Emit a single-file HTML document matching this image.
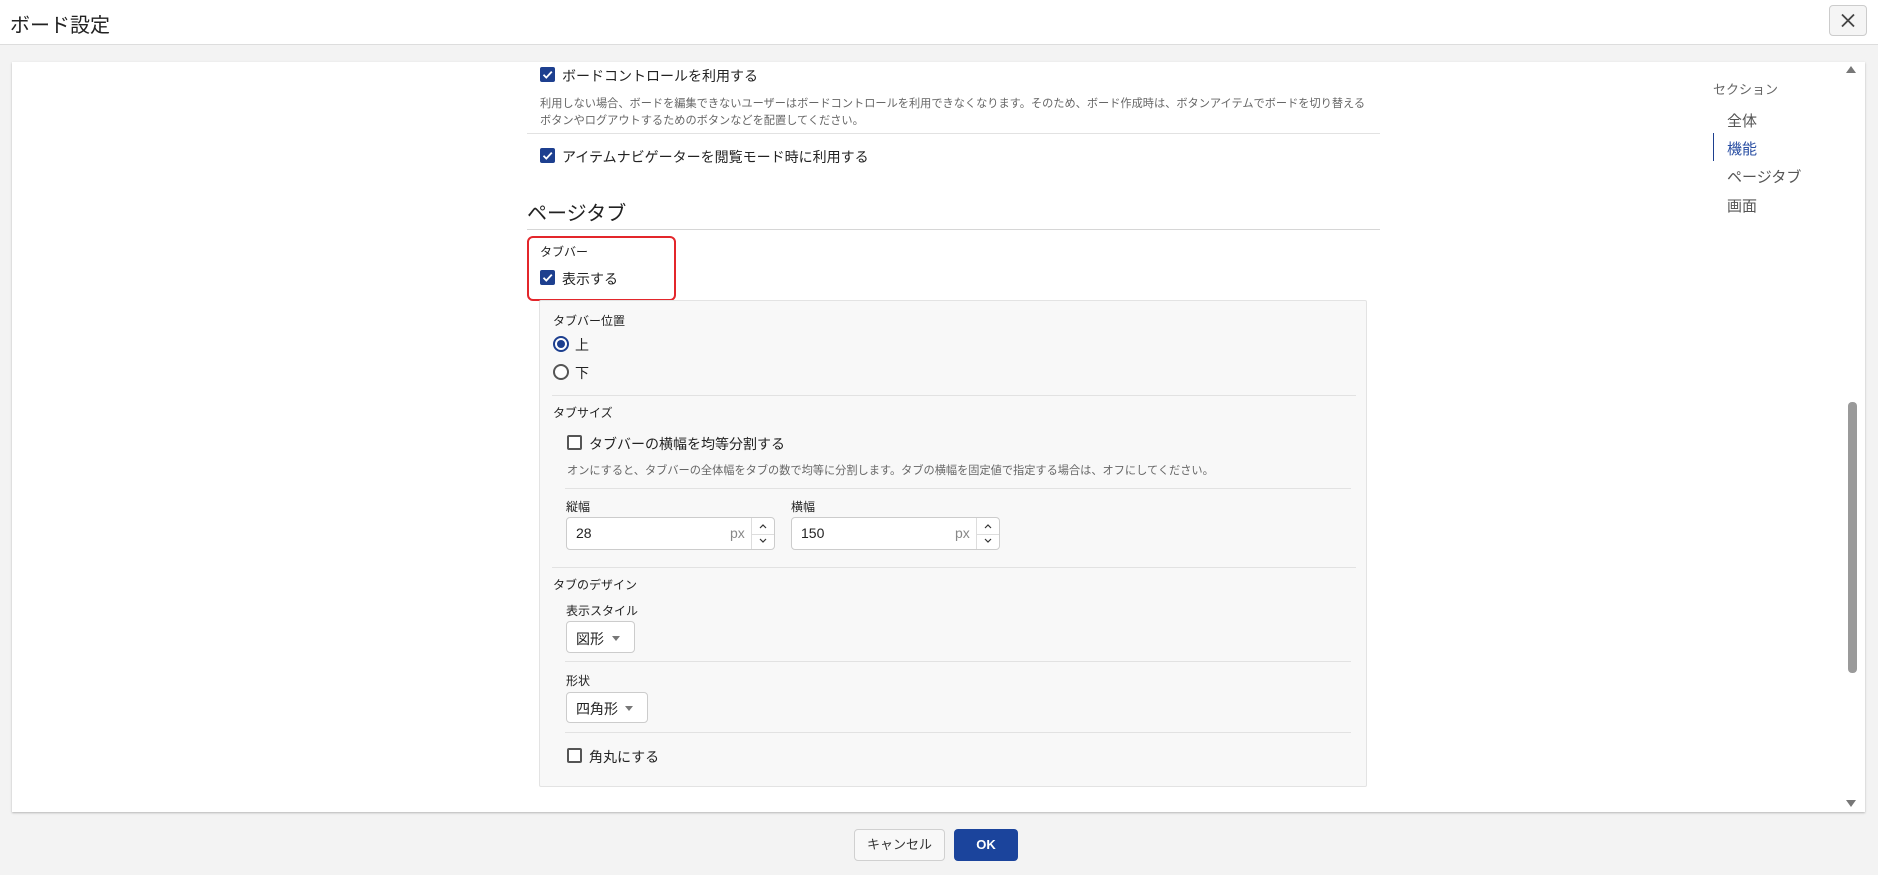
<!DOCTYPE html>
<html><head><meta charset="utf-8"><style>
*{box-sizing:border-box;margin:0;padding:0}
body{width:1878px;height:875px;background:#f3f3f3;font-family:"Liberation Sans","Noto Sans CJK JP",sans-serif;color:#222;position:relative;overflow:hidden}
.a{position:absolute;white-space:nowrap}
.hdr{left:0;top:0;width:1878px;height:45px;background:#fff;border-bottom:1px solid #ddd}
.card{left:12px;top:62px;width:1853px;height:750px;background:#fff;box-shadow:0 1px 2px rgba(0,0,0,.25)}
.cb{width:15px;height:15px;border-radius:2px;background:#1d3f8f}
.cb svg{display:block}
.cbo{width:15px;height:15px;border:2px solid #555;border-radius:2px;background:#fff}
.hr{height:1px;background:#e2e2e2}
.t15{font-size:14px}
.desc{font-size:11.2px;color:#666;line-height:17px}
.lbl{font-size:12px;color:#222}
.inp{background:#fff;border:1px solid #ccc;border-radius:4px;height:33px}
.sel{background:#fff;border:1px solid #ccc;border-radius:4px}
.nav{font-size:15px;color:#555}
</style></head><body>
<div class="a hdr"></div>
<div class="a" style="left:10px;top:9px;font-size:20px;color:#222">ボード設定</div>
<div class="a" style="left:1829px;top:5px;width:38px;height:31px;border:1px solid #ccc;border-radius:4px;background:#f5f5f5"><svg width="36" height="29" viewBox="0 0 36 29"><path d="M12 8.5l12 12M24 8.5l-12 12" stroke="#444" stroke-width="1.8"/></svg></div>

<div class="a card"></div>
<div class="a" style="left:1846px;top:66px;width:0;height:0;border-left:5px solid transparent;border-right:5px solid transparent;border-bottom:7px solid #777"></div>
<div class="a" style="left:1848px;top:402px;width:9px;height:271px;background:#9a9a9a;border-radius:4px"></div>
<div class="a" style="left:1846px;top:800px;width:0;height:0;border-left:5px solid transparent;border-right:5px solid transparent;border-top:7px solid #777"></div>

<div class="a cb" style="left:540px;top:67px"><svg width="15" height="15"><path d="M3.5 7.8l2.8 2.8 5.5-6" stroke="#fff" stroke-width="1.8" fill="none"/></svg></div>
<div class="a t15" style="left:562px;top:66px">ボードコントロールを利用する</div>
<div class="a desc" style="left:540px;top:96px">利用しない場合、ボードを編集できないユーザーはボードコントロールを利用できなくなります。そのため、ボード作成時は、ボタンアイテムでボードを切り替える<br>ボタンやログアウトするためのボタンなどを配置してください。</div>
<div class="a hr" style="left:527px;top:133px;width:853px"></div>
<div class="a cb" style="left:540px;top:148px"><svg width="15" height="15"><path d="M3.5 7.8l2.8 2.8 5.5-6" stroke="#fff" stroke-width="1.8" fill="none"/></svg></div>
<div class="a t15" style="left:562px;top:147px">アイテムナビゲーターを閲覧モード時に利用する</div>

<div class="a" style="left:527px;top:197px;font-size:20px;color:#222">ページタブ</div>
<div class="a hr" style="left:527px;top:229px;width:853px;background:#d6d6d6"></div>

<div class="a" style="left:527px;top:236px;width:149px;height:65px;border:2px solid #e3262b;border-radius:6px"></div>
<div class="a lbl" style="left:540px;top:243px">タブバー</div>
<div class="a cb" style="left:540px;top:270px"><svg width="15" height="15"><path d="M3.5 7.8l2.8 2.8 5.5-6" stroke="#fff" stroke-width="1.8" fill="none"/></svg></div>
<div class="a t15" style="left:562px;top:269px">表示する</div>

<div class="a" style="left:539px;top:300px;width:828px;height:487px;background:#f8f8f8;border:1px solid #e3e3e3;border-radius:2px"></div>
<div class="a lbl" style="left:553px;top:312px">タブバー位置</div>
<div class="a" style="left:553px;top:336px;width:16px;height:16px;border:2px solid #1d3f8f;border-radius:50%;background:#fff"><div style="margin:2px;width:8px;height:8px;border-radius:50%;background:#1d3f8f"></div></div>
<div class="a t15" style="left:575px;top:335px">上</div>
<div class="a" style="left:553px;top:364px;width:16px;height:16px;border:2px solid #555;border-radius:50%;background:#fff"></div>
<div class="a t15" style="left:575px;top:363px">下</div>
<div class="a hr" style="left:552px;top:395px;width:804px"></div>
<div class="a lbl" style="left:553px;top:404px">タブサイズ</div>
<div class="a cbo" style="left:567px;top:435px"></div>
<div class="a t15" style="left:589px;top:434px">タブバーの横幅を均等分割する</div>
<div class="a desc" style="left:567px;top:463px">オンにすると、タブバーの全体幅をタブの数で均等に分割します。タブの横幅を固定値で指定する場合は、オフにしてください。</div>
<div class="a hr" style="left:565px;top:488px;width:786px"></div>
<div class="a lbl" style="left:566px;top:498px">縦幅</div>
<div class="a lbl" style="left:791px;top:498px">横幅</div>
<div class="a inp" style="left:566px;top:517px;width:209px"><div style="position:absolute;right:22px;top:0;bottom:0;border-left:1px solid #ddd"></div><div style="position:absolute;right:0;top:16px;width:22px;border-top:1px solid #ddd"></div><svg style="position:absolute;right:0;top:0" width="22" height="31"><path d="M8 10l3-3 3 3M8 21l3 3 3-3" stroke="#333" stroke-width="1.2" fill="none"/></svg></div>
<div class="a t15" style="left:576px;top:525px">28</div>
<div class="a t15" style="left:730px;top:525px;color:#888">px</div>
<div class="a inp" style="left:791px;top:517px;width:209px"><div style="position:absolute;right:22px;top:0;bottom:0;border-left:1px solid #ddd"></div><div style="position:absolute;right:0;top:16px;width:22px;border-top:1px solid #ddd"></div><svg style="position:absolute;right:0;top:0" width="22" height="31"><path d="M8 10l3-3 3 3M8 21l3 3 3-3" stroke="#333" stroke-width="1.2" fill="none"/></svg></div>
<div class="a t15" style="left:801px;top:525px">150</div>
<div class="a t15" style="left:955px;top:525px;color:#888">px</div>
<div class="a hr" style="left:552px;top:567px;width:804px"></div>
<div class="a lbl" style="left:553px;top:576px">タブのデザイン</div>
<div class="a lbl" style="left:566px;top:602px">表示スタイル</div>
<div class="a sel" style="left:566px;top:621px;width:69px;height:32px"></div>
<div class="a t15" style="left:576px;top:629px">図形</div>
<div class="a" style="left:612px;top:636px;border-left:4px solid transparent;border-right:4px solid transparent;border-top:5px solid #777"></div>
<div class="a hr" style="left:565px;top:661px;width:786px"></div>
<div class="a lbl" style="left:566px;top:672px">形状</div>
<div class="a sel" style="left:566px;top:692px;width:82px;height:31px"></div>
<div class="a t15" style="left:576px;top:699px">四角形</div>
<div class="a" style="left:625px;top:706px;border-left:4px solid transparent;border-right:4px solid transparent;border-top:5px solid #777"></div>
<div class="a hr" style="left:565px;top:732px;width:786px"></div>
<div class="a cbo" style="left:567px;top:748px"></div>
<div class="a t15" style="left:589px;top:747px">角丸にする</div>

<div class="a" style="left:1713px;top:79px;font-size:13px;color:#666">セクション</div>
<div class="a nav" style="left:1727px;top:110px">全体</div>
<div class="a" style="left:1713px;top:133px;width:1px;height:28px;background:#1d3f8f"></div>
<div class="a nav" style="left:1727px;top:138px;color:#2a4fa3">機能</div>
<div class="a nav" style="left:1727px;top:166px">ページタブ</div>
<div class="a nav" style="left:1727px;top:195px">画面</div>

<div class="a" style="left:854px;top:829px;width:91px;height:32px;border:1px solid #d0d0d0;border-radius:4px;background:#f8f8f8;font-size:13px;text-align:center;line-height:30px;color:#333">キャンセル</div>
<div class="a" style="left:954px;top:829px;width:64px;height:32px;border-radius:4px;background:#1b449c;font-size:13px;text-align:center;line-height:32px;color:#fff;font-weight:bold">OK</div>
</body></html>
